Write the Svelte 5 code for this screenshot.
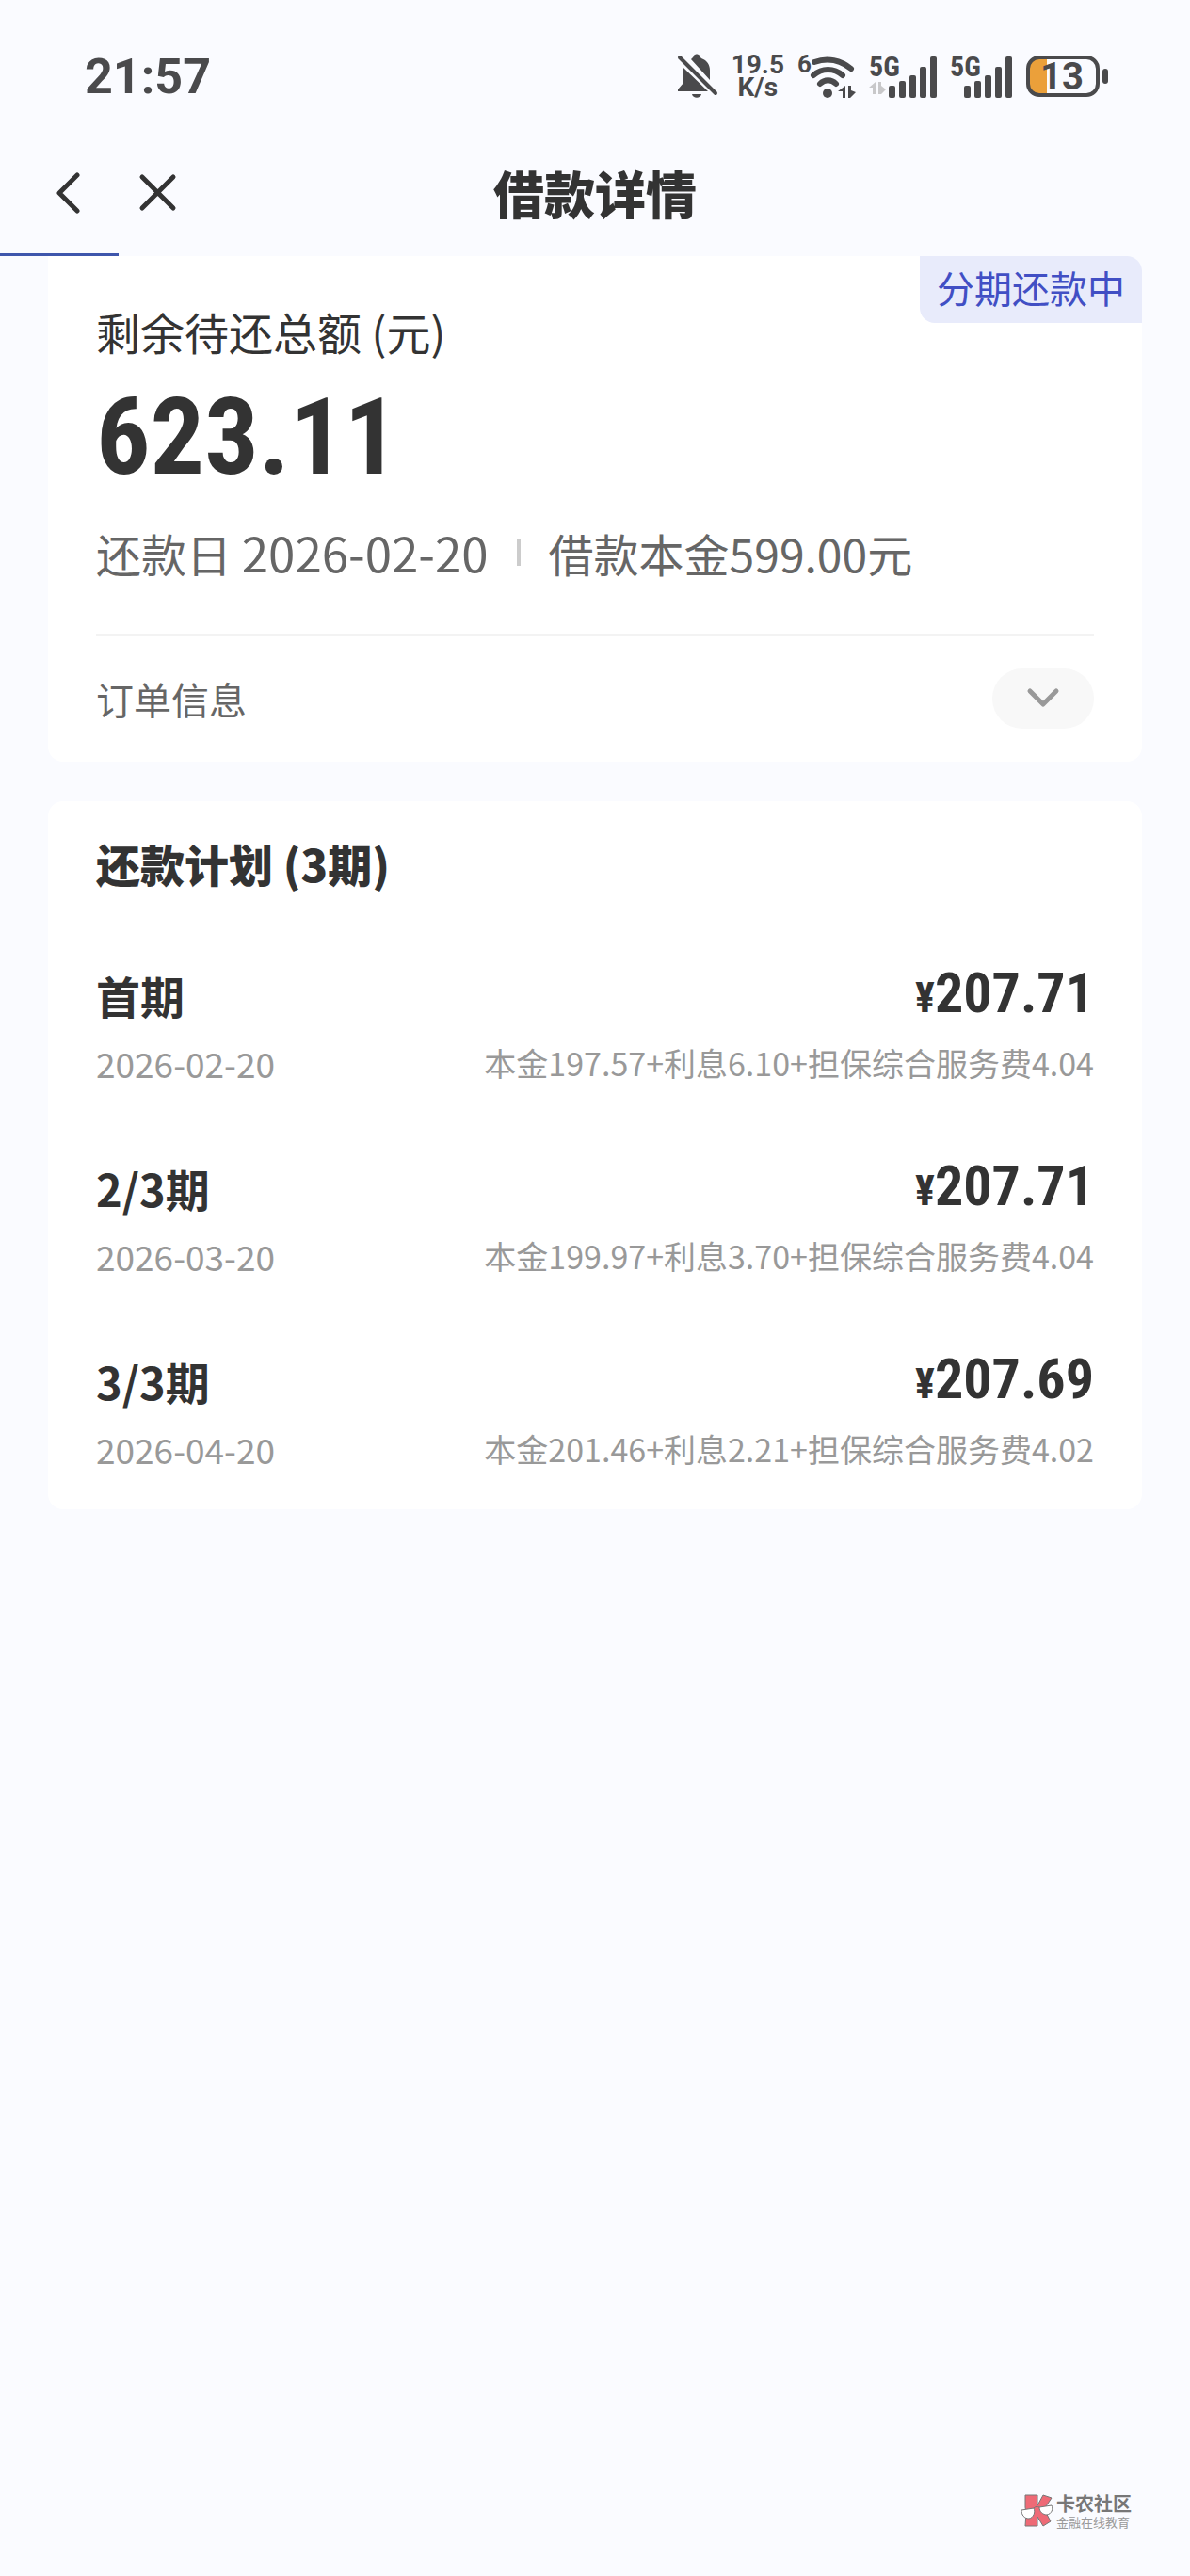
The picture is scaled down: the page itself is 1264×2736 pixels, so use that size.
<script lang="ts">
	const loan = {
		status: '分期还款中',
		remaining: '623.11',
		dueDate: '2026-02-20',
		principal: '599.00'
	};

	const plan = [
		{ id: 1, label: '首期', date: '2026-02-20', amount: '207.71', detail: '本金197.57+利息6.10+担保综合服务费4.04' },
		{ id: 2, label: '2/3期', date: '2026-03-20', amount: '207.71', detail: '本金199.97+利息3.70+担保综合服务费4.04' },
		{ id: 3, label: '3/3期', date: '2026-04-20', amount: '207.69', detail: '本金201.46+利息2.21+担保综合服务费4.02' }
	];

	const bars = [13, 18, 24, 33, 44];
	const progress = 10;
</script>

{#snippet signal(data: boolean)}
	<svg width={data ? 71 : 66} height="48" viewBox="0 0 {data ? 71 : 66} 48" aria-hidden="true">
		<text x="0" y="24" class="net">5G</text>
		{#if data}
			<path class="faint" d="M7 30v13H4v-7H0zM10 30h3v4l5 4-5 5h-3z" />
		{/if}
		{#each bars as h, i}
			<rect x={21 + i * 11 - (data ? 0 : 6)} y={47 - h} width="7" height={h} rx="2" />
		{/each}
	</svg>
{/snippet}

<div class="page">
	<div class="status-bar">
		<span class="time">21:57</span>
		<div class="indicators">
			<svg width="42" height="48" viewBox="0 0 42 48" aria-hidden="true">
				<path d="M15 5c1-1 2-2 2-3 1-2 5-2 6 0 0 1 1 2 2 3 6 2 9 7 9 13v10L14 6z" />
				<path d="M6 15l26 25H0v-2l6-7z" />
				<path d="M15 43h10c-1 5-9 5-10 0z" />
				<path class="line" stroke-width="4" d="M2 4l38 38" />
			</svg>
			<span class="speed">19.5<br />K/s</span>
			<svg class="wifi" width="60" height="48" viewBox="0 0 60 48" aria-hidden="true">
				<text x="-1" y="20" class="gen">6</text>
				<path class="line" stroke-width="6" d="M17 9c14-5 28-2 39 7" />
				<path class="line" stroke-width="6" d="M16 23c9-8 22-8 31 0" />
				<path class="line" stroke-width="6" d="M23 32c5-5 12-5 17 0" />
				<circle cx="31" cy="42" r="5" />
				<path d="M50 34v13h-3v-7h-5zM53 34h3v5l5 2-6 6h-2z" />
			</svg>
			{@render signal(true)}
			{@render signal(false)}
			<svg class="battery" width="88" height="44" viewBox="0 0 88 44" aria-hidden="true">
				<path fill="#eba03a" d="M14 3h8v38h-8C7 41 3 37 3 30V14C3 7 7 3 14 3z" />
				<rect x="2" y="2" width="74" height="40" rx="12" fill="none" stroke="#4a4a4c" stroke-width="4" />
				<rect x="81" y="14" width="6" height="16" rx="3" />
				<text x="38" y="36" text-anchor="middle" class="level">13</text>
			</svg>
		</div>
	</div>

	<header>
		<div class="nav">
			<button aria-label="返回">
				<svg width="44" height="44" viewBox="0 0 44 44" aria-hidden="true">
					<path d="M32 3L13 22l19 19" />
				</svg>
			</button>
			<button aria-label="关闭">
				<svg width="44" height="44" viewBox="0 0 44 44" aria-hidden="true">
					<path d="M5 5l33 33M38 5L5 38" />
				</svg>
			</button>
		</div>
		<h1>借款详情</h1>
		<div class="progress" style="width: {progress}%"></div>
	</header>

	<main>
		<section class="card summary">
			<span class="badge">{loan.status}</span>
			<p class="label">剩余待还总额 (元)</p>
			<p class="total">{loan.remaining}</p>
			<p class="meta">
				<span>还款日 <span class="due">{loan.dueDate}</span></span>
				<i class="sep"></i>
				<span>借款本金{loan.principal}元</span>
			</p>
			<div class="order">
				<span id="order-label">订单信息</span>
				<button aria-labelledby="order-label" aria-expanded="false">
					<svg width="36" height="24" viewBox="0 0 36 24" aria-hidden="true">
						<path d="M4 4l14 14L32 4" />
					</svg>
				</button>
			</div>
		</section>

		<section class="card plan">
			<h2>还款计划 (3期)</h2>
			<ul>
				{#each plan as item (item.id)}
					<li>
						<div class="row">
							<span class="term">{item.label}</span>
							<span class="amount"><small>¥</small>{item.amount}</span>
						</div>
						<div class="row sub">
							<span class="date">{item.date}</span>
							<span>{item.detail}</span>
						</div>
					</li>
				{/each}
			</ul>
		</section>
	</main>

	<footer>
		<svg width="36" height="36" viewBox="0 0 36 36" aria-hidden="true">
			<path
				fill="#ee6a76"
				stroke="#777"
				stroke-width="1"
				d="M5 1h13v11l6-11 9 3-8 12 7 13-8 5-6-10v10H5l1-14L5 14z"
			/>
			<path fill="#fff" stroke="#777" stroke-width="1" d="M1 17l13-2c2 4 0 10-5 11-5 0-8-4-8-9zM20 14l13-2c2 4 0 9-5 10-4 0-8-3-8-8z" />
			<path fill="none" stroke="#777" stroke-width="1" d="M14 15c2-2 4-2 6-1" />
		</svg>
		<div class="brand">
			<strong>卡农社区</strong>
			<span>金融在线教育</span>
		</div>
	</footer>
</div>

<style>
	:global(body) {
		margin: 0;
		background: #fafbff;
	}

	.page {
		display: flex;
		flex-direction: column;
		min-height: 100vh;
		color: #333;
		font-family: 'Noto Sans CJK SC', sans-serif;
	}

	p,
	h1,
	h2,
	ul {
		margin: 0;
		padding: 0;
	}

	button {
		display: flex;
		align-items: center;
		justify-content: center;
		padding: 0;
		border: 0;
		background: none;
		cursor: pointer;
	}

	button svg {
		fill: none;
		stroke: #333;
		stroke-width: 5;
		stroke-linecap: round;
		stroke-linejoin: round;
	}

	.status-bar {
		display: flex;
		align-items: center;
		justify-content: space-between;
		height: 114px;
		padding: 24px 86px 0 90px;
		color: #4a4a4c;
		font-family: Roboto, sans-serif;
		font-weight: 700;
	}

	.time {
		font-size: 52px;
	}

	.indicators {
		display: flex;
		align-items: center;
		gap: 15px;
	}

	.indicators svg {
		fill: #4a4a4c;
		overflow: visible;
	}

	.indicators .line {
		fill: none;
		stroke: #4a4a4c;
		stroke-linecap: round;
	}

	.indicators .faint {
		fill: #c8c8ca;
	}

	.speed {
		font-size: 28px;
		line-height: 24px;
		text-align: center;
	}

	.net {
		font-size: 30px;
		font-family: 'Roboto Condensed', Roboto, sans-serif;
	}

	.gen {
		font-size: 26px;
	}

	.level {
		font-size: 40px;
	}

	header {
		position: relative;
		display: flex;
		align-items: center;
		justify-content: center;
		height: 134px;
	}

	.nav {
		position: absolute;
		left: 50px;
		display: flex;
		gap: 52px;
	}

	h1 {
		font-size: 54px;
		font-weight: 900;
		line-height: 64px;
	}

	.progress {
		position: absolute;
		left: 0;
		bottom: 0;
		height: 3px;
		background: #3e56ac;
	}

	main {
		display: flex;
		flex-direction: column;
		gap: 42px;
		padding: 0 51px;
	}

	.card {
		position: relative;
		padding: 0 51px;
		border-radius: 16px;
		background: #fff;
	}

	.summary {
		padding-top: 48px;
		border-top-left-radius: 0;
	}

	.badge {
		position: absolute;
		top: 0;
		right: 0;
		padding: 0 18px 5px;
		border-radius: 0 16px;
		background: #e8ebfb;
		color: #414fc4;
		font-size: 40px;
		line-height: 66px;
	}

	.label {
		font-size: 47px;
		line-height: 64px;
	}

	.total {
		font-family: 'Roboto Condensed', Roboto, sans-serif;
		font-size: 114px;
		font-weight: 700;
		line-height: 160px;
	}

	.meta {
		display: flex;
		align-items: center;
		padding: 10px 0 54px;
		border-bottom: 2px solid #f3f3f3;
		color: #666;
		font-size: 48px;
		line-height: 64px;
	}

	.due {
		font-size: 51px;
	}

	.sep {
		width: 4px;
		height: 28px;
		margin: 0 30px;
		background: #ccc;
	}

	.order {
		display: flex;
		align-items: center;
		justify-content: space-between;
		height: 134px;
		color: #666;
		font-size: 40px;
	}

	.order button {
		width: 108px;
		height: 64px;
		border-radius: 32px;
		background: #f8f8f8;
	}

	.order button svg {
		stroke: #999;
	}

	.plan {
		padding-top: 34px;
		padding-bottom: 32px;
	}

	h2 {
		font-size: 47px;
		font-weight: 900;
		line-height: 64px;
	}

	ul {
		display: flex;
		flex-direction: column;
		gap: 61px;
		margin-top: 68px;
		list-style: none;
	}

	.row {
		display: flex;
		align-items: center;
		justify-content: space-between;
		height: 80px;
		line-height: 80px;
	}

	.term {
		font-size: 47px;
		font-weight: 700;
	}

	.amount {
		font-family: 'Roboto Condensed', Roboto, sans-serif;
		font-size: 60px;
		font-weight: 700;
	}

	.amount small {
		font-size: 44px;
	}

	.sub {
		height: 64px;
		color: #999;
		font-size: 34px;
		line-height: 64px;
	}

	.date {
		font-size: 37px;
	}

	footer {
		display: flex;
		align-items: center;
		justify-content: flex-end;
		gap: 2px;
		margin-top: auto;
		padding: 0 62px 50px;
		color: #777;
	}

	.brand {
		display: flex;
		flex-direction: column;
		gap: 2px;
	}

	.brand strong {
		font-size: 20px;
		line-height: 22px;
	}

	.brand span {
		color: #999;
		font-size: 13px;
		line-height: 14px;
	}
</style>
